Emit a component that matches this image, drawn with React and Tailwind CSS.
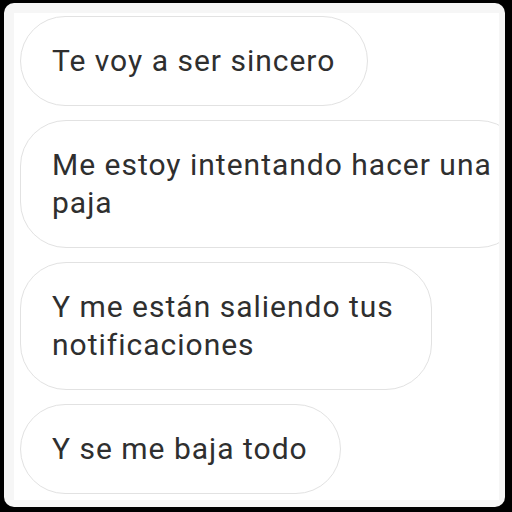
const messages = [
  { text: "Te voy a ser sincero", width: "w-fit" },
  { text: "Me estoy intentando hacer una\npaja", width: "w-[505px]" },
  { text: "Y me están saliendo tus\nnotificaciones", width: "w-[412px]" },
  { text: "Y se me baja todo", width: "w-fit" },
];

function Bubble({ text, width }) {
  return (
    <div
      className={`${width} shrink-0 rounded-[46px] border border-[#e2e2e2] bg-white pl-[31px] pr-[32px] py-[25px] text-[30px] leading-[38px] tracking-[1px] text-[#2f2f2f] whitespace-pre`}
    >
      {text}
    </div>
  );
}

export default function App() {
  return (
    <div className="h-[512px] w-[512px] bg-black pl-[4px] pt-[3px] font-['Roboto',sans-serif]">
      <div className="h-[504px] w-[501px] rounded-[10px] bg-[#f6f6f6] pl-[10px] pt-[10px]">
        <div className="flex h-[487px] w-[485px] flex-col gap-[14px] overflow-hidden bg-white pl-[6px] pt-[3px]">
          {messages.map((m, i) => (
            <Bubble key={i} text={m.text} width={m.width} />
          ))}
        </div>
      </div>
    </div>
  );
}
